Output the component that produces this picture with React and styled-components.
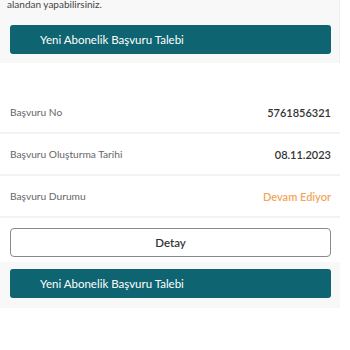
import React from "react";
import styled, { createGlobalStyle } from "styled-components";

const Global = createGlobalStyle`
  body {
    margin: 0;
    background: #fff;
    font-family: "Lato", "Liberation Sans", sans-serif;
    overflow: hidden;
  }
`;

const Page = styled.div`
  width: 350px;
  height: 350px;
  display: flex;
  flex-direction: column;
`;

const Top = styled.section`
  width: 340px;
  background: #f8f8f8;
  padding: 0 9px 9px 10px;
  box-sizing: border-box;
  margin-top: -3px;
  border-right: 1px solid #f0f0f0;
`;

const Hint = styled.p`
  margin: 0 0 14px -3px;
  font-size: 10px;
  line-height: 14px;
  color: #444;
`;

const TealButton = styled.button`
  width: 321px;
  height: 29px;
  border: none;
  border-radius: 3px;
  background: #0e6470;
  color: #fff;
  font-family: inherit;
  font-size: 11.5px;
  text-align: left;
  padding: 0 0 0 30px;
  box-sizing: border-box;
`;

const List = styled.div`
  width: 340px;
  margin-top: 29px;
  display: flex;
  flex-direction: column;
`;

const Row = styled.div`
  height: 42px;
  padding: 0 9px 0 10px;
  display: flex;
  align-items: center;
  justify-content: space-between;
  border-bottom: 2px solid #f3f3f3;
  box-sizing: border-box;
`;

const Label = styled.span`
  font-size: 10.2px;
  color: #666;
`;

const Value = styled.span`
  font-size: 11px;
  font-weight: 600;
  color: ${({ $accent }) => ($accent ? "#f2a65a" : "#333")};
`;

const DetailWrap = styled.div`
  width: 340px;
  padding: 10px 9px 5px 10px;
  box-sizing: border-box;
`;

const Outline = styled.button`
  width: 321px;
  height: 29px;
  background: #fff;
  border: 1px solid #8a8a8a;
  border-radius: 4px;
  font-family: inherit;
  font-size: 11.5px;
  font-weight: 600;
  color: #333;
`;

const Bottom = styled.section`
  width: 340px;
  background: #f8f8f8;
  padding: 7px 9px 10px 10px;
  box-sizing: border-box;
`;

export default function App() {
  return (
    <Page>
      <Global />
      <Top>
        <Hint>alandan yapabilirsiniz.</Hint>
        <TealButton>Yeni Abonelik Başvuru Talebi</TealButton>
      </Top>
      <List>
        <Row>
          <Label>Başvuru No</Label>
          <Value>5761856321</Value>
        </Row>
        <Row>
          <Label>Başvuru Oluşturma Tarihi</Label>
          <Value>08.11.2023</Value>
        </Row>
        <Row>
          <Label>Başvuru Durumu</Label>
          <Value $accent>Devam Ediyor</Value>
        </Row>
      </List>
      <DetailWrap>
        <Outline>Detay</Outline>
      </DetailWrap>
      <Bottom>
        <TealButton>Yeni Abonelik Başvuru Talebi</TealButton>
      </Bottom>
    </Page>
  );
}
